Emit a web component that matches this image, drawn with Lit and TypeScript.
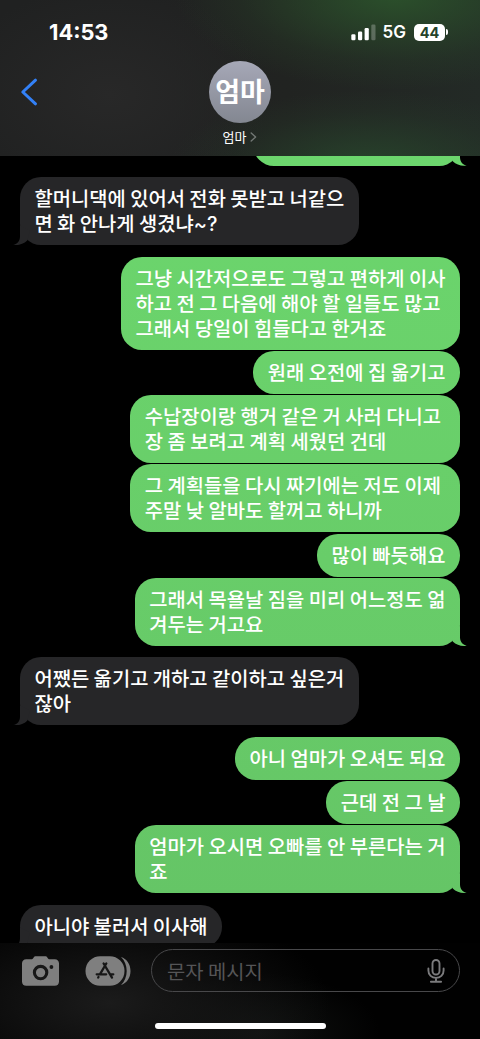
import { LitElement, html, css } from "lit";
import { customElement, property, state } from "lit/decorators.js";
import { classMap } from "lit/directives/class-map.js";
import { styleMap } from "lit/directives/style-map.js";

interface Message {
  lines: string[];
  mine: boolean;
  tail?: boolean;
  width?: number;
}

// A trailing space at a line end counts towards the width of the bubble
const MESSAGES: Message[] = [
  { lines: [" "], mine: true, tail: true, width: 207 },
  { lines: ["할머니댁에 있어서 전화 못받고 너같으", "면 화 안나게 생겼냐~?"], mine: false, tail: true },
  {
    lines: ["그냥 시간저으로도 그렇고 편하게 이사", "하고 전 그 다음에 해야 할 일들도 많고", "그래서 당일이 힘들다고 한거죠"],
    mine: true,
  },
  { lines: ["원래 오전에 집 옮기고"], mine: true },
  { lines: ["수납장이랑 행거 같은 거 사러 다니고 ", "장 좀 보려고 계획 세웠던 건데"], mine: true },
  { lines: ["그 계획들을 다시 짜기에는 저도 이제 ", "주말 낮 알바도 할꺼고 하니까"], mine: true },
  { lines: ["많이 빠듯해요"], mine: true },
  { lines: ["그래서 목욜날 짐을 미리 어느정도 얾", "겨두는 거고요"], mine: true, tail: true },
  { lines: ["어쨌든 옮기고 개하고 같이하고 싶은거", "잖아"], mine: false, tail: true },
  { lines: ["아니 엄마가 오셔도 되요"], mine: true },
  { lines: ["근데 전 그 날"], mine: true },
  { lines: ["엄마가 오시면 오빠를 안 부른다는 거", "죠"], mine: true, tail: true },
  { lines: ["아니야 불러서 이사해"], mine: false, tail: true },
];

@customElement("chat-bubble")
export class ChatBubble extends LitElement {
  @property({ attribute: false }) message!: Message;

  static styles = css`
    :host {
      display: block;
    }

    .bubble {
      position: relative;
      box-sizing: border-box;
      padding: 8px 14.6px 10px 14.4px;
      border-radius: 21px;
      background: #262628;
      color: #fff;
      font-size: 19.85px;
      font-weight: 500;
      line-height: 25px;
      white-space: pre;
    }

    .mine {
      background: linear-gradient(#6cd66d 150px, #68cd69 560px, #65c566 900px) fixed;
    }

    .line {
      height: 25px;
    }

    .latin {
      font-family: Inter, sans-serif;
      line-height: 1;
    }

    .tail {
      position: absolute;
      bottom: 0;
      left: -7px;
      width: 27px;
      height: 20px;
      background: inherit;
      clip-path: path("M7 0V11C7 15.5 4.5 18.8 0.3 19.6C5.5 20.5 10.5 18.8 14.3 15.3L17 5Z");
    }

    .mine .tail {
      left: auto;
      right: -7px;
      clip-path: path("M20 0V11C20 15.5 22.5 18.8 26.7 19.6C21.5 20.5 16.5 18.8 12.7 15.3L10 5Z");
    }
  `;

  private renderLine(line: string) {
    const parts = line.split(/([~?]+)/);
    return html`<div class="line">${parts.map((part, i) =>
      i % 2 ? html`<span class="latin">${part}</span>` : part
    )}</div>`;
  }

  render() {
    const { lines, mine, tail, width } = this.message;
    return html`
      <div
        class=${classMap({ bubble: true, mine })}
        style=${styleMap(width ? { width: `${width}px` } : {})}
      >${lines.map((line) => this.renderLine(line))}${tail
        ? html`<div class="tail"></div>`
        : ""}</div>
    `;
  }
}

@customElement("chat-header")
export class ChatHeader extends LitElement {
  static styles = css`
    :host {
      display: block;
      box-sizing: border-box;
      height: 156px;
      background:
        radial-gradient(ellipse 220px 95px at 395px -5px, #2b502b, #2b502b99 35%, #2b502b33 70%, #2b502b00),
        radial-gradient(ellipse 200px 75px at 370px 165px, #27422b, #27422b99 35%, #27422b33 70%, #27422b00),
        radial-gradient(ellipse 160px 110px at 110px 95px, #282828, #28282800),
        linear-gradient(90deg, #202121 35%, #212321 60%, #232a26);
    }

    .status {
      display: flex;
      align-items: center;
      height: 61px;
      padding: 3px 32px 0 49px;
      box-sizing: border-box;
      color: #fff;
      font-family: Inter, sans-serif;
      font-weight: 600;
    }

    .time {
      flex: 1;
      font-size: 21.8px;
      font-weight: 700;
    }

    .network {
      margin: 0 8px 0 7px;
      font-size: 17px;
    }

    .battery {
      width: 31px;
      height: 17px;
      border-radius: 5px;
      background: #fff;
      color: #24432a;
      font-size: 14.5px;
      font-weight: 700;
      line-height: 17px;
      text-align: center;
    }

    .cap {
      width: 2px;
      height: 6px;
      margin-left: 1px;
      border-radius: 0 3px 3px 0;
      background: #fff;
    }

    .bar {
      display: grid;
      grid-template-columns: 1fr auto 1fr;
      align-items: start;
    }

    .back {
      margin: 17px 0 0 20px;
    }

    .contact {
      display: flex;
      flex-direction: column;
      align-items: center;
    }

    .avatar {
      width: 62px;
      height: 62px;
      border-radius: 50%;
      background: linear-gradient(#a6a8b7, #838791);
      color: #fff;
      font-size: 27px;
      font-weight: 700;
      line-height: 59px;
      text-align: center;
    }

    .name {
      display: flex;
      align-items: center;
      gap: 4px;
      margin-top: 5px;
      color: #fff;
      font-size: 13px;
      line-height: 18px;
    }
  `;

  render() {
    return html`
      <div class="status">
        <span class="time">14:53</span>
        <svg width="25" height="17" viewBox="0 0 25 17" fill="#fff">
          <rect x="0.3" y="10.2" width="4.2" height="6" rx="1.2" />
          <rect x="7" y="7.5" width="4.2" height="8.7" rx="1.2" />
          <rect x="13.6" y="4" width="4.2" height="12.2" rx="1.2" />
          <rect x="20.3" y="0.5" width="4.2" height="15.7" rx="1.2" opacity="0.25" />
        </svg>
        <span class="network">5G</span>
        <span class="battery">44</span>
        <span class="cap"></span>
      </div>
      <div class="bar">
        <svg class="back" width="18" height="28" viewBox="0 0 18 28" fill="none" stroke="#3381f7" stroke-width="3" stroke-linecap="round" stroke-linejoin="round">
          <path d="M15.5 2.2L2.8 14L15.5 25.8" />
        </svg>
        <div class="contact">
          <div class="avatar">엄마</div>
          <div class="name">
            <span>엄마</span>
            <svg width="7" height="10" viewBox="0 0 7 10" fill="none" stroke="#737875" stroke-width="1.4" stroke-linecap="round" stroke-linejoin="round">
              <path d="M1.2 1L5.6 5L1.2 9" />
            </svg>
          </div>
        </div>
      </div>
    `;
  }
}

@customElement("chat-composer")
export class ChatComposer extends LitElement {
  static styles = css`
    :host {
      display: flex;
      flex-direction: column;
      align-items: center;
      height: 96px;
      background:
        radial-gradient(ellipse 220px 100px at 110px 60px, #1b1b1b, #1b1b1b00),
        radial-gradient(ellipse 120px 60px at 260px 90px, #101211, #10121100),
        #010101;
    }

    .row {
      display: flex;
      align-items: center;
      box-sizing: border-box;
      width: 100%;
      padding: 6px 20px 0 22px;
    }

    .apps {
      margin: 0 20px 0 26px;
    }

    .field {
      display: flex;
      flex: 1;
      align-items: center;
      justify-content: space-between;
      box-sizing: border-box;
      height: 43px;
      padding: 0 14px 0 15px;
      border: 1px solid #48484a;
      border-radius: 22px;
      color: #555557;
      font-size: 19.85px;
    }

    .home {
      width: 171px;
      height: 6px;
      margin-top: 31px;
      border-radius: 3px;
      background: #fff;
    }
  `;

  render() {
    return html`
      <div class="row">
        <svg width="37" height="30" viewBox="0 0 37 30">
          <path fill="#7f7f7f" d="M4.3 3.3H9.2C10.3 3.3 10.8 2.8 11.4 1.9C12.2 0.7 12.8 0.3 14.2 0.3H22.8C24.2 0.3 24.8 0.7 25.6 1.9C26.2 2.8 26.7 3.3 27.8 3.3H32.7C35.4 3.3 37 4.9 37 7.6V25.4C37 28.1 35.4 29.7 32.7 29.7H4.3C1.6 29.7 0 28.1 0 25.4V7.6C0 4.9 1.6 3.3 4.3 3.3Z" />
          <circle cx="18.6" cy="16.6" r="6.2" fill="none" stroke="#171717" stroke-width="3.1" />
          <circle cx="29.4" cy="11" r="1.9" fill="#171717" />
        </svg>
        <svg class="apps" width="46" height="30" viewBox="0 0 46 30">
          <rect x="0.5" y="0.3" width="39" height="29.4" rx="14.7" fill="#7f7f7f" />
          <path fill="#7f7f7f" d="M36 1C41.5 2.6 45.5 8 45.5 15C45.5 22 41.5 27.4 36 29C39.6 25.6 41.7 20.6 41.7 15C41.7 9.4 39.6 4.4 36 1Z" />
          <g fill="none" stroke="#171717" stroke-width="2.3" stroke-linecap="round">
            <path d="M21.3 7.5L14.9 18.4M18.6 7.5L27 21.6M11.7 18.3H21.2M25.6 18.3H28.3M13.5 21L13.2 21.5" />
          </g>
        </svg>
        <div class="field">
          <span>문자 메시지</span>
          <svg width="18" height="24" viewBox="0 0 18 24" fill="none" stroke="#7b7b7d" stroke-width="1.9" stroke-linecap="round">
            <rect x="5.5" y="1" width="7" height="14.5" rx="3.5" />
            <path d="M1.4 9.5V11.5C1.4 16 4.7 18.9 9 18.9C13.3 18.9 16.6 16 16.6 11.5V9.5M9 19V22.6M3.9 22.8H14.1" />
          </svg>
        </div>
      </div>
      <div class="home"></div>
    `;
  }
}

@customElement("app-root")
export class AppRoot extends LitElement {
  @state() private messages = MESSAGES;

  static styles = css`
    :host {
      display: flex;
      flex-direction: column;
      width: 480px;
      height: 1039px;
      overflow: hidden;
      background: #000;
      font-family: "Noto Sans CJK KR", sans-serif;
    }

    .thread {
      display: flex;
      flex: 1;
      flex-direction: column;
      align-items: flex-start;
      min-height: 0;
      overflow: hidden;
      padding: 0 20px;
    }

    .item {
      flex: none;
      margin-bottom: 1.3px;
    }

    .item:first-child {
      margin-top: -33px;
    }

    .mine {
      align-self: flex-end;
    }

    .last {
      margin-bottom: 11.3px;
    }
  `;

  render() {
    return html`
      <chat-header></chat-header>
      <div class="thread">
        ${this.messages.map(
          (message) => html`
            <chat-bubble
              class=${classMap({ item: true, mine: message.mine, last: !!message.tail })}
              .message=${message}
            ></chat-bubble>
          `
        )}
      </div>
      <chat-composer></chat-composer>
    `;
  }
}
